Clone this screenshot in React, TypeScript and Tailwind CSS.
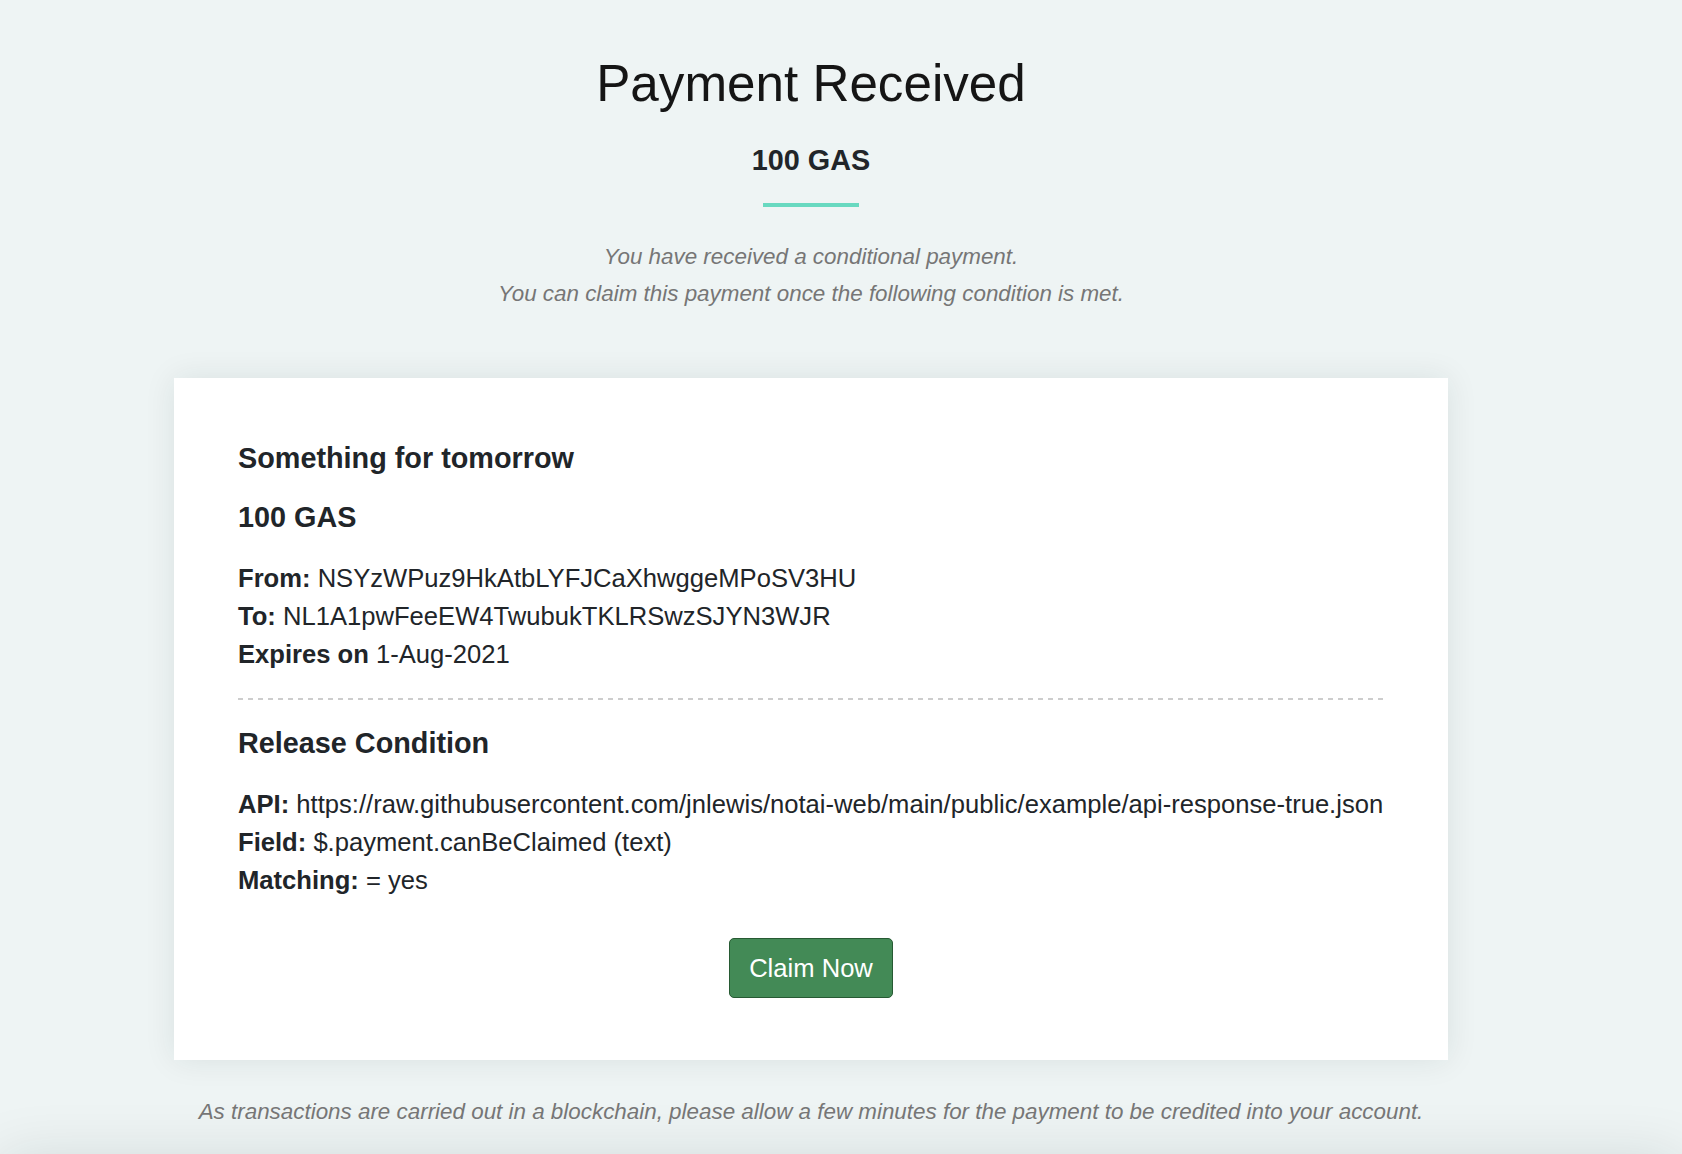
import React from "react";

// ================================================
// Data
// ================================================
const details = [
  { label: "From:", value: "NSYzWPuz9HkAtbLYFJCaXhwggeMPoSV3HU" },
  { label: "To:", value: "NL1A1pwFeeEW4TwubukTKLRSwzSJYN3WJR" },
  { label: "Expires on", value: "1-Aug-2021" },
];

const condition = [
  {
    label: "API:",
    value:
      "https://raw.githubusercontent.com/jnlewis/notai-web/main/public/example/api-response-true.json",
  },
  { label: "Field:", value: "$.payment.canBeClaimed (text)" },
  { label: "Matching:", value: "= yes" },
];

// ================================================
// Row
// ================================================
const InfoRow: React.FC<{ label: string; value: string }> = ({ label, value }) => (
  <div className="whitespace-nowrap">
    <span className="font-bold">{label}</span> {value}
  </div>
);

// ================================================
// Page
// ================================================
export default function App() {
  return (
    <div
      className="min-h-[1154px] overflow-hidden bg-[#eef4f4] text-[#212529]"
      style={{ fontFamily: '"Liberation Sans", Arial, Helvetica, sans-serif' }}
    >
      <div className="w-[1622px] flex flex-col items-center pt-[53px]">
        <h1 className="text-[51.2px] leading-[1.2] font-normal text-[#151515]">
          Payment Received
        </h1>
        <div className="mt-[29px] text-[28.8px] leading-[1.2] font-bold">100 GAS</div>
        <div className="mt-[25.5px] h-[4px] w-[96px] bg-[#68d9c0]" />

        <div className="mt-[30.5px] text-center text-[22.4px] leading-[37.5px] italic text-[#767676]">
          <p>You have received a conditional payment.</p>
          <p>You can claim this payment once the following condition is met.</p>
        </div>

        {/* Payment card */}
        <div className="mt-[65px] w-[1274px] bg-white px-16 pt-[63px] pb-[62px] shadow-[0_0_30px_rgba(0,40,40,0.09)]">
          <h3 className="text-[28.8px] leading-[1.2] font-bold">Something for tomorrow</h3>
          <h3 className="mt-[24px] text-[28.8px] leading-[1.2] font-bold">100 GAS</h3>

          <div className="mt-[25px] text-[25.6px] leading-[38px]">
            {details.map((d) => (
              <InfoRow key={d.label} label={d.label} value={d.value} />
            ))}
          </div>

          <div className="mt-[25px] h-[2px] bg-[repeating-linear-gradient(to_right,#cdcdcd_0_5px,transparent_5px_10px)]" />

          <h3 className="mt-[25.5px] text-[28.8px] leading-[1.2] font-bold">Release Condition</h3>

          <div className="mt-[25px] text-[25.6px] leading-[38px]">
            {condition.map((c) => (
              <InfoRow key={c.label} label={c.label} value={c.value} />
            ))}
          </div>

          <div className="mt-[39px] flex justify-center">
            <button className="rounded-[5px] border border-[#275a33] bg-[#438a56] px-[19.2px] py-[9.6px] text-[25.6px] leading-[38.4px] text-white">
              Claim Now
            </button>
          </div>
        </div>

        <p className="mt-[35px] text-[22.4px] leading-[1.5] italic text-[#767676]">
          As transactions are carried out in a blockchain, please allow a few minutes for the
          payment to be credited into your account.
        </p>
      </div>

      {/* footer edge below the fold */}
      <div className="mt-[30px] h-[80px] bg-[#eef4f4] shadow-[0_0_60px_rgba(0,30,30,0.12)]" />
    </div>
  );
}
